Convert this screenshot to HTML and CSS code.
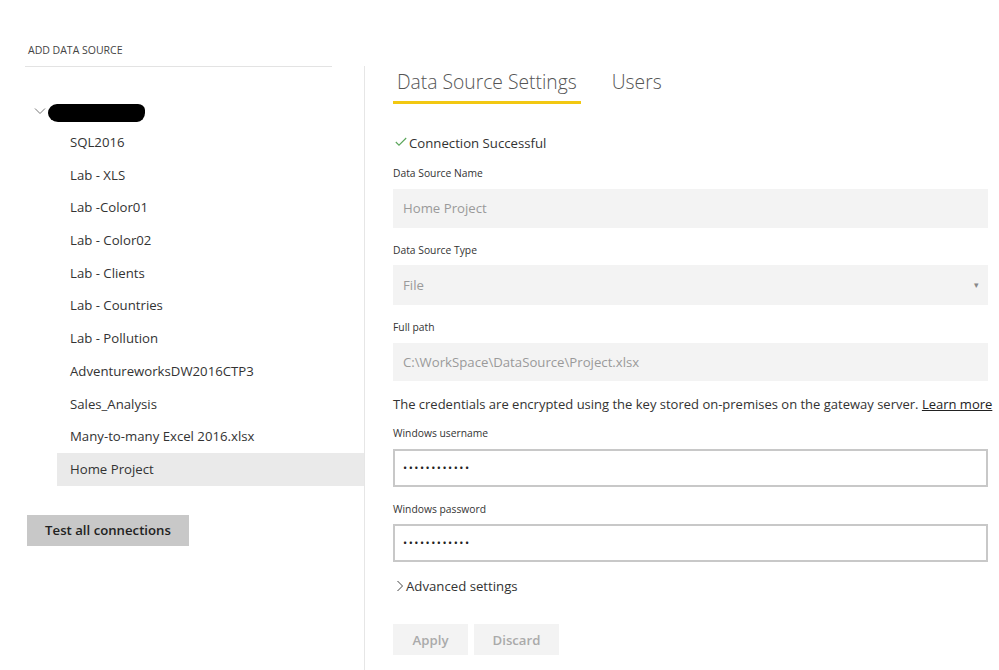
FILE: index.html
```html
<!DOCTYPE html>
<html>
<head>
<meta charset="utf-8">
<link rel="stylesheet" href="styles.css">
</head>
<body>
<div class="page">
  <aside class="left">
    <div class="left-head">ADD DATA SOURCE</div>
    <div class="tree">
      <div class="tree-root">
        <svg class="chev-down" width="12" height="8" viewBox="0 0 12 8"><path d="M1 1.5 L6 6.5 L11 1.5" fill="none" stroke="#777" stroke-width="1"/></svg>
        <span class="redact"></span>
      </div>
      <ul class="items">
        <li>SQL2016</li>
        <li>Lab - XLS</li>
        <li>Lab -Color01</li>
        <li>Lab - Color02</li>
        <li>Lab - Clients</li>
        <li>Lab - Countries</li>
        <li>Lab - Pollution</li>
        <li>AdventureworksDW2016CTP3</li>
        <li>Sales_Analysis</li>
        <li>Many-to-many Excel 2016.xlsx</li>
        <li class="selected">Home Project</li>
      </ul>
    </div>
    <button class="test-btn">Test all connections</button>
  </aside>
  <main class="right">
    <div class="tabs">
      <div class="tab active">Data Source Settings</div>
      <div class="tab">Users</div>
    </div>
    <div class="status">
      <svg width="12" height="10" viewBox="0 0 12 10"><path d="M0.8 5 L4 8.2 L11.2 1" fill="none" stroke="#5aa55a" stroke-width="1.1"/></svg>
      <span>Connection Successful</span>
    </div>
    <label class="lbl">Data Source Name</label>
    <div class="field ro">Home Project</div>
    <label class="lbl">Data Source Type</label>
    <div class="field ro select">File<span class="caret">&#9662;</span></div>
    <label class="lbl">Full path</label>
    <div class="field ro short">C:\WorkSpace\DataSource\Project.xlsx</div>
    <p class="note">The credentials are encrypted using the key stored on-premises on the gateway server. <a href="#">Learn more</a></p>
    <label class="lbl">Windows username</label>
    <div class="field pw">&bull;&bull;&bull;&bull;&bull;&bull;&bull;&bull;&bull;&bull;&bull;&bull;</div>
    <label class="lbl">Windows password</label>
    <div class="field pw">&bull;&bull;&bull;&bull;&bull;&bull;&bull;&bull;&bull;&bull;&bull;&bull;</div>
    <div class="adv">
      <svg width="8" height="12" viewBox="0 0 8 12"><path d="M1.5 1 L6.5 6 L1.5 11" fill="none" stroke="#444" stroke-width="1"/></svg>
      <span>Advanced settings</span>
    </div>
    <div class="actions">
      <button class="btn">Apply</button>
      <button class="btn">Discard</button>
    </div>
  </main>
</div>
</body>
</html>
```
FILE: styles.css
```css
* { box-sizing: border-box; }
html, body { margin: 0; padding: 0; background: #fff; }
body {
  font-family: "Open Sans", "Noto Sans", "Liberation Sans", sans-serif;
  color: #333;
  width: 999px;
  height: 670px;
  overflow: hidden;
}
.page { display: flex; height: 670px; }
.left { width: 364px; flex: none; padding-top: 43px; }
.left-head {
  margin-left: 25px;
  width: 307px;
  padding: 0 0 9px 3px;
  font-size: 10.5px;
  color: #444;
  border-bottom: 1px solid #e3e3e3;
}
.tree { padding-top: 33px; }
.tree-root { display: flex; align-items: center; height: 24px; padding-left: 34px; }
.chev-down { margin-top: -2px; }
.redact {
  display: block;
  width: 97px;
  height: 18px;
  background: #000;
  border-radius: 9px 7px 8px 10px / 9px 6px 9px 9px;
  margin-left: 2px;
  margin-top: 1px;
}
.items { list-style: none; margin: 2px 0 0 0; padding: 0 0 0 57px; }
.items li {
  height: 32.7px;
  line-height: 32.7px;
  padding-left: 13px;
  font-size: 13.2px;
  color: #333;
  white-space: nowrap;
}
.items li.selected { background: #eaeaea; }
.test-btn {
  margin: 29px 0 0 27px;
  width: 162px;
  height: 31px;
  border: none;
  background: #c8c8c8;
  font-family: inherit;
  font-size: 13.2px;
  font-weight: 600;
  color: #222;
  padding: 0;
}
.right {
  flex: 1;
  margin-top: 66px;
  border-left: 1px solid #e6e6e6;
  padding-left: 28px;
  min-width: 0;
}
.tabs { display: flex; gap: 27px; padding-top: 2px; }
.tab {
  font-size: 19.3px;
  font-weight: 300;
  color: #555;
  line-height: 28px;
  padding: 0 4px 5px 4px;
  border-bottom: 3px solid transparent;
}
.tab.active { border-bottom-color: #f2c811; }
.status {
  display: flex;
  align-items: center;
  margin-top: 29px;
  height: 20px;
  font-size: 13.2px;
  color: #333;
  padding-left: 2px;
}
.status svg { margin-right: 2px; margin-top: -3px; }
.lbl { display: block; font-size: 10.3px; color: #333; margin-top: 13px; height: 15px; line-height: 15px; }
.field {
  width: 595px;
  height: 39px;
  margin-top: 7.5px;
  padding-left: 10px;
  font-size: 13.2px;
  line-height: 39px;
  white-space: nowrap;
}
.field.ro { background: #f3f3f3; color: #9a9a9a; }
.field.select { position: relative; height: 40px; line-height: 40px; }
.field.short { height: 38px; line-height: 38px; }
.caret { position: absolute; right: 9px; top: 0; font-size: 9px; color: #888; }
.field + .lbl { margin-top: 15px; }
.note {
  margin: 13px 0 0 0;
  font-size: 13px;
  color: #333;
  white-space: nowrap;
  height: 20px;
  line-height: 20px;
}
.note a { color: #222; text-decoration: underline; }
.note + .lbl { margin-top: 12.5px; }
.field.pw {
  background: #fff;
  border: 2px solid #c8c8c8;
  height: 38px;
  line-height: 34px;
  padding-left: 8px;
  color: #222;
  font-size: 11px;
  letter-spacing: 1.5px;
}
.adv {
  display: flex;
  align-items: center;
  margin-top: 14px;
  height: 20px;
  font-size: 13.2px;
  color: #333;
  padding-left: 3px;
}
.adv svg { margin-right: 2px; }
.actions { display: flex; gap: 6px; margin-top: 28px; }
.btn {
  height: 31px;
  border: none;
  background: #f3f3f3;
  color: #aaa;
  font-family: inherit;
  font-size: 13.2px;
  font-weight: 600;
  padding: 0;
}
.btn:first-child { width: 75px; }
.btn:last-child { width: 85px; }
```
